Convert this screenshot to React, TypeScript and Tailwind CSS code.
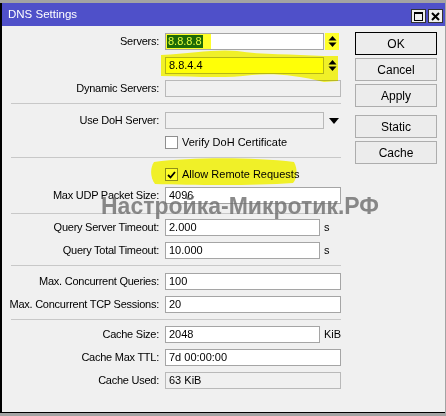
import type { ReactNode } from 'react';

const font = { fontFamily: '"Liberation Sans", Arial, sans-serif' };

function Spinner() {
  return (
    <svg width="9" height="13" viewBox="0 0 9 13" className="shrink-0">
      <path d="M0.5 5.5 L4.5 1 L8.5 5.5 Z" fill="#000" />
      <path d="M0.5 7.5 L4.5 12 L8.5 7.5 Z" fill="#000" />
    </svg>
  );
}

function Row({ label, children, className = '' }: { label?: string; children: ReactNode; className?: string }) {
  return (
    <div className={`flex h-[17px] items-center ${className}`}>
      <div className="w-[158px] shrink-0 whitespace-nowrap pr-[1px] text-right tracking-[-0.25px]">{label ? `${label}:` : ''}</div>
      <div className="ml-[5px] flex items-center">{children}</div>
    </div>
  );
}

function Field({ value, width = 176, disabled = false }: { value?: string; width?: number; disabled?: boolean }) {
  const w = width === 176 ? 'w-[176px]' : 'w-[155px]';
  return (
    <div
      className={`flex h-[17px] items-center border pl-[3px] leading-none ${w} ${
        disabled ? 'border-[#b9b9b9] bg-[#f0f0f0]' : 'border-[#a5a5a5] bg-white'
      }`}
    >
      {value}
    </div>
  );
}

function Sep({ className = '' }: { className?: string }) {
  return <div className={`ml-[9px] h-px w-[330px] bg-[#c8c8c8] ${className}`} />;
}

function Check({ checked, label, className = '' }: { checked?: boolean; label: string; className?: string }) {
  return (
    <div className={`flex h-[13px] items-center pl-[163px] ${className}`}>
      <div className="flex h-[13px] w-[13px] items-center justify-center border border-[#8f8f8f] bg-white">
        {checked && (
          <svg width="9" height="8" viewBox="0 0 9 8">
            <path d="M1 4 L3.5 6.5 L8 1" fill="none" stroke="#000" strokeWidth="1.8" />
          </svg>
        )}
      </div>
      <span className="ml-[4px] whitespace-nowrap">{label}</span>
    </div>
  );
}

function Btn({ label, primary = false, className = '' }: { label: string; primary?: boolean; className?: string }) {
  return (
    <div
      className={`flex h-[23px] w-[82px] items-center justify-center border bg-[#ececec] text-[12px] ${
        primary ? 'border-black' : 'border-[#adadad]'
      } ${className}`}
    >
      {label}
    </div>
  );
}

export default function App() {
  return (
    <div className="h-[416px] w-[446px] bg-[#a3a3a3] pt-[3px]" style={font}>
      <div className="relative h-[410px] w-[445px] border-l-2 border-b border-black bg-[#f0f0f0] text-[11px] text-black">
        <div className="flex h-[23px] items-center justify-between bg-[#4f50c9] pl-[6px] pr-[2px]">
          <span className="text-[11.5px] text-white">DNS Settings</span>
          <div className="mt-[3px] flex gap-[2px]">
            <div className="flex h-[14px] w-[15px] items-center justify-center border border-[#333] bg-[#f0f0f0]">
              <div className="h-[9px] w-[9px] border border-t-2 border-black" />
            </div>
            <div className="flex h-[14px] w-[15px] items-center justify-center border border-[#333] bg-[#f0f0f0]">
              <svg width="9" height="9" viewBox="0 0 9 9">
                <path d="M1 1 L8 8 M8 1 L1 8" stroke="#000" strokeWidth="2" />
              </svg>
            </div>
          </div>
        </div>

        <div className="flex">
          <div className="w-[350px] shrink-0">
            <Row label="Servers" className="mt-[7px]">
              <div className="relative flex h-[17px] w-[159px] items-center border border-[#a5a5a5] bg-white">
                <div className="flex h-[15px] items-center bg-[#ffff2a] pl-[1px] pr-[8px]">
                  <span className="bg-[#1d6a06] px-[1px] leading-[13px] text-[#e8ff3c]">8.8.8.8</span>
                </div>
              </div>
              <div className="ml-[1px] flex h-[17px] w-[14px] items-center justify-center bg-[#ffff2a]">
                <Spinner />
              </div>
            </Row>
            <Row className="mt-[7px]">
              <div className="flex h-[17px] w-[159px] items-center border border-[#b5b58a] bg-[#ffff2a] pl-[3px]">8.8.4.4</div>
              <div className="ml-[1px] flex w-[14px] justify-center">
                <Spinner />
              </div>
            </Row>
            <Row label="Dynamic Servers" className="mt-[6px]">
              <Field disabled />
            </Row>
            <Sep className="mt-[6px]" />
            <Row label="Use DoH Server" className="mt-[8px]">
              <div className="h-[17px] w-[159px] border border-[#b9b9b9] bg-[#f0f0f0]" />
              <svg width="10" height="6" viewBox="0 0 10 6" className="ml-[5px]">
                <path d="M0 0 L10 0 L5 6 Z" fill="#000" />
              </svg>
            </Row>
            <Check label="Verify DoH Certificate" className="mt-[7px]" />
            <Sep className="mt-[8px]" />
            <Check checked label="Allow Remote Requests" className="mt-[10px]" />
            <Row label="Max UDP Packet Size" className="mt-[6px]">
              <Field value="4096" />
            </Row>
            <Sep className="mt-[9px]" />
            <Row label="Query Server Timeout" className="mt-[5px]">
              <Field value="2.000" width={155} />
              <span className="ml-[4px]">s</span>
            </Row>
            <Row label="Query Total Timeout" className="mt-[6px]">
              <Field value="10.000" width={155} />
              <span className="ml-[4px]">s</span>
            </Row>
            <Sep className="mt-[6px]" />
            <Row label="Max. Concurrent Queries" className="mt-[7px]">
              <Field value="100" />
            </Row>
            <Row label="Max. Concurrent TCP Sessions" className="mt-[6px]">
              <Field value="20" />
            </Row>
            <Sep className="mt-[6px]" />
            <Row label="Cache Size" className="mt-[6px]">
              <Field value="2048" width={155} />
              <span className="ml-[4px]">KiB</span>
            </Row>
            <Row label="Cache Max TTL" className="mt-[6px]">
              <Field value="7d 00:00:00" />
            </Row>
            <Row label="Cache Used" className="mt-[6px]">
              <Field value="63 KiB" disabled />
            </Row>
          </div>

          <div className="ml-[3px] flex flex-col pt-[6px]">
            <Btn label="OK" primary />
            <Btn label="Cancel" className="mt-[3px]" />
            <Btn label="Apply" className="mt-[3px]" />
            <Btn label="Static" className="mt-[8px]" />
            <Btn label="Cache" className="mt-[3px]" />
          </div>
        </div>

        {/* marker strokes drawn over the form */}
        <svg className="pointer-events-none absolute left-0 top-0 mix-blend-multiply" width="445" height="410" viewBox="0 0 445 410">
          <path d="M159 52 C190 50 215 46 235 48 C260 52 290 51 322 53 L336 53 L336 78 L322 79 C295 72 270 70 250 72 C220 76 190 73 159 73 Z" fill="#ffff2a" />
          <path d="M152 159 C190 154 250 154 292 159 C296 166 295 176 291 180 C250 183 190 182 153 181 C148 174 148 165 152 159 Z" fill="#ffff2a" />
        </svg>

        <div className="pointer-events-none absolute left-[99px] top-[192px] whitespace-nowrap text-[23px] font-bold leading-none text-[#6e6e6e] opacity-80">
          Настройка-Микротик.РФ
        </div>
      </div>
    </div>
  );
}
